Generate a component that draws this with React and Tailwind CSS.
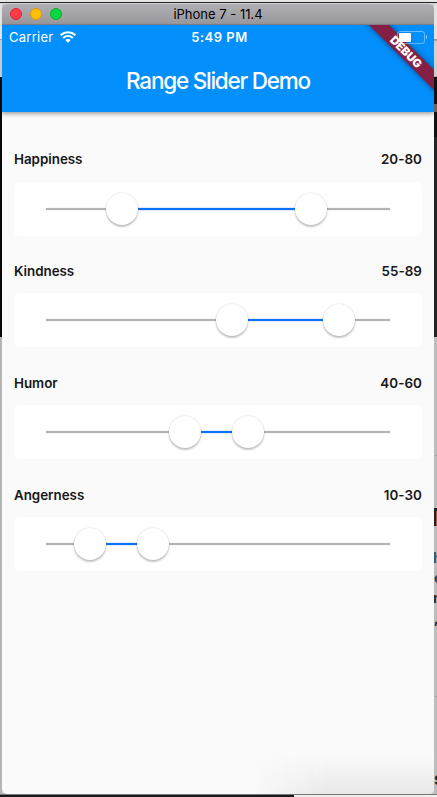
const sliders = [
  { name: "Happiness", low: 20, high: 80 },
  { name: "Kindness", low: 55, high: 89 },
  { name: "Humor", low: 40, high: 60 },
  { name: "Angerness", low: 10, high: 30 },
];

// The thumbs travel 315px, inset 45px from the card's left edge.
const position = (value) => 44.8 + value * 3.15;

function Thumb({ value }) {
  return (
    <div
      className="absolute top-[11px] size-8 -translate-x-1/2 rounded-full bg-white shadow-[0_2px_2px_rgba(0,0,0,0.22),0_0_1.5px_rgba(0,0,0,0.22)]"
      style={{ left: position(value) }}
    />
  );
}

function RangeSlider({ name, low, high }) {
  return (
    <section className="mb-[23.9px]">
      <div className="mb-[10px] flex h-6 items-center justify-between text-[13.4px] font-semibold tracking-[-0.03px] text-[#171717]">
        <span>{name}</span>
        <span className="tracking-[0.05px]">{low}-{high}</span>
      </div>
      <div className="relative flex h-[54px] items-center rounded-[5px] bg-white px-8">
        <div className="h-[2px] w-full bg-[#b3b3b3] shadow-[0_0_1px_#b3b3b3]" />
        <div
          className="absolute top-[26px] h-[2px] bg-[#0f70fa] shadow-[0_0_1px_#0f70fa]"
          style={{ left: position(low), width: position(high) - position(low) }}
        />
        <Thumb value={low} />
        <Thumb value={high} />
      </div>
    </section>
  );
}

function Wifi() {
  return (
    <svg className="h-[12px] w-[16px]" viewBox="0 0 16 12" fill="none" stroke="white">
      <path d="M.6 4.1C4.8.3 11.2.3 15.4 4.1" strokeWidth="2.1" />
      <path d="M3.2 6.9C6 4.4 10 4.4 12.8 6.9" strokeWidth="2" />
      <path d="M5.3 9C6.9 7.5 9.1 7.5 10.7 9L8 11.7Z" fill="white" stroke="none" />
    </svg>
  );
}

function Header() {
  return (
    <header className="relative z-10 h-[87px] shrink-0 bg-[#0390fc] text-white shadow-[0_2px_4px_rgba(0,0,0,0.35)]">
      <div className="absolute inset-0 overflow-hidden">
        <div className="absolute left-[354px] top-[20px] flex h-[14px] w-[100px] rotate-45 items-center justify-center bg-[#851f43] pt-px text-[11.5px] font-black leading-none tracking-[-0.1px] shadow-[0_0_6px_rgba(0,0,0,0.5)]">
          DEBUG
        </div>
      </div>
      <div className="relative grid h-6 grid-cols-[1fr_auto_1fr] items-center">
        <div className="flex items-center gap-[7px] pl-[7px] text-[13px] tracking-[0.25px]">
          <span className="pt-px">Carrier</span>
          <Wifi />
        </div>
        <span className="pl-[3px] pt-px text-[13px] font-semibold tracking-[0.5px]">5:49 PM</span>
        <div className="flex items-center justify-end gap-px pr-[7px]">
          <div className="h-[13px] w-[28px] rounded-[3px] border border-white/40 p-[1px]">
            <div className="h-full w-[12px] rounded-[1px] bg-white" />
          </div>
          <div className="h-[4px] w-[1.5px] rounded-r bg-white/50" />
        </div>
      </div>
      <h1 className="pt-[16px] text-center text-[22.5px] font-medium leading-8 tracking-[-1.23px]">
        Range Slider Demo
      </h1>
    </header>
  );
}

function TitleBar() {
  return (
    <div className="grid h-[21px] shrink-0 grid-cols-[1fr_auto_1fr] items-center border-b border-[#858389] bg-linear-to-b from-[#b0afb4] to-[#98979c]">
      <div className="flex gap-2 pl-2">
        <i className="size-3 rounded-full border border-[#e0232f] bg-[#ff3b49]" />
        <i className="size-3 rounded-full border border-[#dd9c0b] bg-[#ffbd05]" />
        <i className="size-3 rounded-full border border-[#12ad2b] bg-[#05d83f]" />
      </div>
      <span className="pt-px text-[13px] leading-none text-black">iPhone 7 - 11.4</span>
    </div>
  );
}

function RightEdge() {
  return (
    <div className="flex flex-col overflow-hidden bg-[#bdbdbd] font-bold text-[#222]">
      <div className="h-[36px] shrink-0 border-b border-[#999] bg-[#e2e2e2]" />
      <div className="h-[37px] shrink-0 border-y border-[#aaa] bg-[#d0d0d0]" />
      <div className="h-[60px] shrink-0 bg-[#111] pt-[27px]">
        <div className="h-2 w-1 bg-[#6b625d]" />
      </div>
      <div className="h-[200px] shrink-0 bg-[#252525]" />
      <div className="h-[119px] shrink-0 border-b border-[#a5a5a5]" />
      <div className="h-[52px] shrink-0" />
      <div className="h-[18px] shrink-0 border-l-2 border-t-[3px] border-[#222] bg-[#a85a3a]" />
      <div className="flex h-[92px] shrink-0 flex-col pt-[22px] text-[14px] leading-5">
        <span className="-ml-px text-[#205778]">h</span>
        <span className="text-[#293d60]">e</span>
        <span className="-ml-px text-[#352820]">n</span>
        <span>,</span>
      </div>
      <div className="h-[79px] shrink-0 border-b border-[#a5a5a5]" />
      <div className="h-[75px] shrink-0" />
      <div className="h-[14px] shrink-0 text-[18px] leading-[14px]">s</div>
    </div>
  );
}

export default function App() {
  return (
    <div className="flex h-[797px] w-[437px] flex-col overflow-hidden bg-[#c2c2c2] font-['Inter','Liberation_Sans',sans-serif]">
      <div className="h-[4px] shrink-0 border-b border-[#d5d5d5] bg-[#e6e6e6] pt-[2px]">
        <div className="h-px bg-[#222]" />
      </div>
      <div className="grid h-[790px] shrink-0 grid-cols-[2px_432px_3px]">
        <div className="flex flex-col bg-[#b5b5b5]">
          <div className="h-[36px] border-b border-[#999] bg-[#e2e2e2]" />
          <div className="h-[37px] bg-[#c8c8c8]" />
          <div className="h-[260px] bg-[#080808]" />
        </div>
        <div className="flex flex-col overflow-hidden rounded-[5px] bg-[#fafafa]">
          <TitleBar />
          <Header />
          <main className="flex flex-1 flex-col px-3 pt-[35.5px]">
            {sliders.map((slider) => (
              <RangeSlider key={slider.name} {...slider} />
            ))}
            <div className="-mr-3 ml-auto mt-auto h-[40px] w-[180px] bg-linear-to-b from-[#fafafa] to-[#e8e8e8] mask-l-from-60% mask-l-to-100%" />
          </main>
        </div>
        <RightEdge />
      </div>
      <div className="flex h-[3px] flex-col">
        <div className="h-px shrink-0 bg-[#777]" />
        <div className="flex h-[2px]">
          <div className="w-[294px] bg-[#181a1c]" />
          <div className="flex-1 bg-[#eeeeec]" />
        </div>
      </div>
    </div>
  );
}
